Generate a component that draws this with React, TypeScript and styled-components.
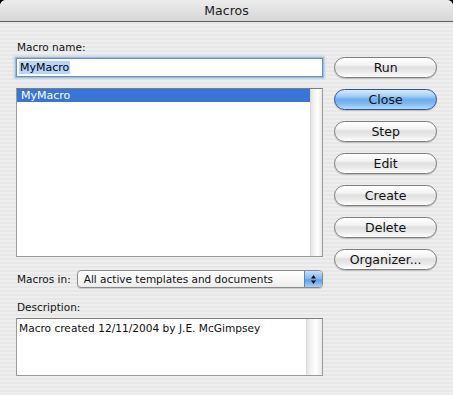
import styled, { createGlobalStyle } from "styled-components";

const GlobalStyle = createGlobalStyle`
  html, body {
    margin: 0;
    padding: 0;
    background: #000;
  }
  body {
    font-family: "DejaVu Sans", "Liberation Sans", sans-serif;
  }
`;

const Window = styled.div`
  width: 453px;
  height: 395px;
  border-radius: 6px 6px 0 0;
  overflow: hidden;
  background: repeating-linear-gradient(
    to bottom,
    #eeeeee 0px,
    #eeeeee 2px,
    #e7e7e7 2px,
    #e7e7e7 4px
  );
  display: flex;
  flex-direction: column;
`;

const TitleBar = styled.div`
  height: 21px;
  flex: none;
  border-bottom: 1px solid #5e5e5e;
  background: linear-gradient(to bottom, #ececec 0%, #e2e2e2 50%, #d6d6d6 100%);
  display: flex;
  align-items: center;
  justify-content: center;
  font-size: 12.5px;
  color: #1a1a1a;
`;

const Body = styled.div`
  display: flex;
  padding: 18px 16px 0 16px;
  gap: 11px;
`;

const LeftColumn = styled.div`
  width: 308px;
  display: flex;
  flex-direction: column;
`;

const RightColumn = styled.div`
  width: 103px;
  display: flex;
  flex-direction: column;
  gap: 11px;
  padding-top: 17px;
`;

const Label = styled.div<{ $mt?: number }>`
  font-size: 10.5px;
  color: #111;
  height: 14px;
  line-height: 14px;
  margin-top: ${(p) => p.$mt ?? 0}px;
  padding-left: 1px;
  flex: none;
`;

const NameInput = styled.div`
  margin-top: 4px;
  height: 17px;
  background: #fff;
  border: 1px solid #6f8fb8;
  box-shadow: 0 0 0 1px #9cbbe0, 0 0 2px 2px #b9d0ec;
  display: flex;
  align-items: center;
  padding-left: 2px;
  font-size: 11px;
`;

const Selection = styled.span`
  background: #b5d5ff;
  color: #000;
  padding: 0 1px;
  line-height: 13px;
`;

const ListBox = styled.div<{ $h: number; $mt: number }>`
  margin-top: ${(p) => p.$mt}px;
  height: ${(p) => p.$h}px;
  background: #fff;
  border: 1px solid #9a9a9a;
  border-top-color: #7d7d7d;
  display: flex;
  box-sizing: border-box;
`;

const ListContent = styled.div`
  flex: 1;
  display: flex;
  flex-direction: column;
`;

const ListRow = styled.div<{ $selected?: boolean }>`
  height: 13px;
  line-height: 13px;
  font-size: 11px;
  padding-left: 4px;
  background: ${(p) => (p.$selected ? "#3875d7" : "transparent")};
  color: ${(p) => (p.$selected ? "#fff" : "#000")};
`;

const DescText = styled.div`
  font-size: 10.6px;
  line-height: 14px;
  padding: 2px 2px;
  color: #111;
`;

const ScrollTrack = styled.div<{ $w: number }>`
  width: ${(p) => p.$w}px;
  flex: none;
  background: linear-gradient(
    to right,
    #e6e6e6 0%,
    #f4f4f4 30%,
    #ffffff 60%,
    #e9e9e9 100%
  );
  border-left: 1px solid #d8d8d8;
`;

const PopupRow = styled.div`
  margin-top: 13px;
  display: flex;
  align-items: center;
  gap: 6px;
`;

const Popup = styled.div`
  width: 245px;
  height: 16px;
  border: 1px solid #8a8a8a;
  border-radius: 4px;
  background: linear-gradient(to bottom, #ffffff 0%, #f6f6f6 55%, #ececec 100%);
  display: flex;
  overflow: hidden;
  box-shadow: 0 1px 1px rgba(0, 0, 0, 0.15);
`;

const PopupText = styled.div`
  flex: 1;
  font-size: 10.5px;
  line-height: 16px;
  padding-left: 6px;
  color: #111;
`;

const PopupArrows = styled.div`
  width: 17px;
  background: linear-gradient(to bottom, #c6e0fa 0%, #7fb6ee 50%, #5d9ee6 55%, #a6d0f6 100%);
  border-left: 1px solid #5a86c4;
  display: flex;
  align-items: center;
  justify-content: center;
`;

const PushButton = styled.div<{ $default?: boolean }>`
  height: 19px;
  border-radius: 11px;
  border: 1px solid ${(p) => (p.$default ? "#30509a" : "#7d7d7d")};
  background: ${(p) =>
    p.$default
      ? "linear-gradient(to bottom, #d9ebfd 0%, #a9d0f7 30%, #6fadee 50%, #7ab8f2 70%, #b4dcfd 100%)"
      : "linear-gradient(to bottom, #ffffff 0%, #f4f4f4 35%, #e0e0e0 50%, #ececec 75%, #ffffff 100%)"};
  display: flex;
  align-items: center;
  justify-content: center;
  font-size: 12.5px;
  color: #111;
  box-shadow: 0 1px 1px rgba(0, 0, 0, 0.18);
`;

const buttons = ["Run", "Close", "Step", "Edit", "Create", "Delete", "Organizer..."];

export default function App() {
  return (
    <>
      <GlobalStyle />
      <Window>
        <TitleBar>Macros</TitleBar>
        <Body>
          <LeftColumn>
            <Label>Macro name:</Label>
            <NameInput>
              <Selection>MyMacro</Selection>
            </NameInput>
            <ListBox $h={169} $mt={11}>
              <ListContent>
                <ListRow $selected>MyMacro</ListRow>
              </ListContent>
              <ScrollTrack $w={11} />
            </ListBox>
            <PopupRow>
              <Label>Macros in:</Label>
              <Popup>
                <PopupText>All active templates and documents</PopupText>
                <PopupArrows>
                  <svg width="7" height="11" viewBox="0 0 7 11">
                    <path d="M3.5 1 L6 4.5 L1 4.5 Z" fill="#111" />
                    <path d="M3.5 10 L6 6.5 L1 6.5 Z" fill="#111" />
                  </svg>
                </PopupArrows>
              </Popup>
            </PopupRow>
            <Label $mt={12}>Description:</Label>
            <ListBox $h={58} $mt={4}>
              <ListContent>
                <DescText>Macro created 12/11/2004 by J.E. McGimpsey</DescText>
              </ListContent>
              <ScrollTrack $w={15} />
            </ListBox>
          </LeftColumn>
          <RightColumn>
            {buttons.map((b) => (
              <PushButton key={b} $default={b === "Close"}>
                {b}
              </PushButton>
            ))}
          </RightColumn>
        </Body>
      </Window>
    </>
  );
}
